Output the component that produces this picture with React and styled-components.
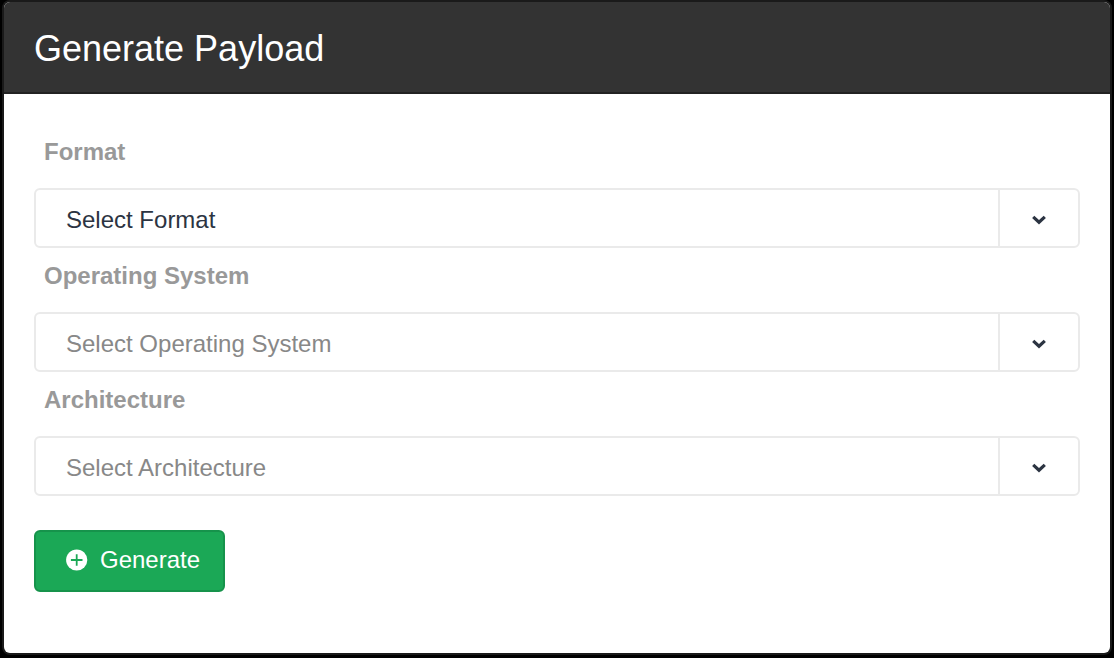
import React from 'react';
import styled, { createGlobalStyle } from 'styled-components';

const GlobalStyle = createGlobalStyle`
  *, *::before, *::after { box-sizing: border-box; }
  body {
    margin: 0;
    background: #000;
    font-family: "Liberation Sans", Arial, sans-serif;
    font-size: 24px;
    line-height: 28px;
  }
`;

const Page = styled.main`
  padding: 2px 4px 5px;
`;

const Panel = styled.section`
  background: #fff;
  border-radius: 6px;
  overflow: hidden;
  box-shadow: 0 0 0 2px #1a1a1a;
`;

const PanelHeader = styled.header`
  padding: 26px 30px 22px;
  background: #333;
  border-bottom: 2px solid #222;
`;

const Title = styled.h1`
  margin: 0;
  color: #fff;
  font-size: 36px;
  font-weight: 400;
  line-height: 42px;
`;

const Form = styled.form`
  padding: 30px 30px 61px;
`;

const Label = styled.label`
  display: block;
  padding: 14px 10px 22px;
  color: #999;
  font-weight: 700;
`;

const SelectBox = styled.div`
  display: grid;
  grid-template-columns: 1fr 82px;
`;

const Select = styled.select`
  grid-area: 1 / 1 / 2 / 3;
  height: 60px;
  padding: 4px 92px 0 30px;
  border: 2px solid #eaeaea;
  border-radius: 6px;
  appearance: none;
  background: #fff;
  color: ${({ $muted }) => ($muted ? '#888' : '#2c3442')};
  font: inherit;
`;

const Arrow = styled.span`
  grid-area: 1 / 2;
  display: flex;
  align-items: center;
  justify-content: center;
  z-index: 1;
  padding: 4px 2px 0 0;
  border-left: 2px solid #eaeaea;
  pointer-events: none;
`;

const SubmitButton = styled.button`
  display: flex;
  align-items: center;
  gap: 12px;
  height: 62px;
  margin-top: 34px;
  padding: 0 23px 2px 30px;
  border: 2px solid #16934b;
  border-radius: 6px;
  background: #1ba856;
  color: #fff;
  font: inherit;
`;

function Field({ id, label, placeholder, muted }) {
  return (
    <>
      <Label htmlFor={id}>{label}</Label>
      <SelectBox>
        <Select id={id} $muted={muted} defaultValue="">
          <option value="">{placeholder}</option>
        </Select>
        <Arrow aria-hidden="true">
          <svg width="16" height="12" viewBox="0 0 16 12">
            <path
              d="M2.2 2.8 L8 8.2 L13.8 2.8"
              fill="none"
              stroke="#2c3442"
              strokeWidth="3.2"
            />
          </svg>
        </Arrow>
      </SelectBox>
    </>
  );
}

export default function App() {
  return (
    <>
      <GlobalStyle />
      <Page>
        <Panel>
          <PanelHeader>
            <Title>Generate Payload</Title>
          </PanelHeader>
          <Form onSubmit={(event) => event.preventDefault()}>
            <Field id="format" label="Format" placeholder="Select Format" />
            <Field id="os" label="Operating System" placeholder="Select Operating System" muted />
            <Field id="arch" label="Architecture" placeholder="Select Architecture" muted />
            <SubmitButton type="submit">
              <svg width="22" height="22" viewBox="0 0 22 22" aria-hidden="true">
                <circle cx="10.7" cy="11" r="10.6" fill="#fff" />
                <path d="M10.7 5.2V16.8M4.9 11H16.5" stroke="#1ba856" strokeWidth="1.8" />
              </svg>
              Generate
            </SubmitButton>
          </Form>
        </Panel>
      </Page>
    </>
  );
}
